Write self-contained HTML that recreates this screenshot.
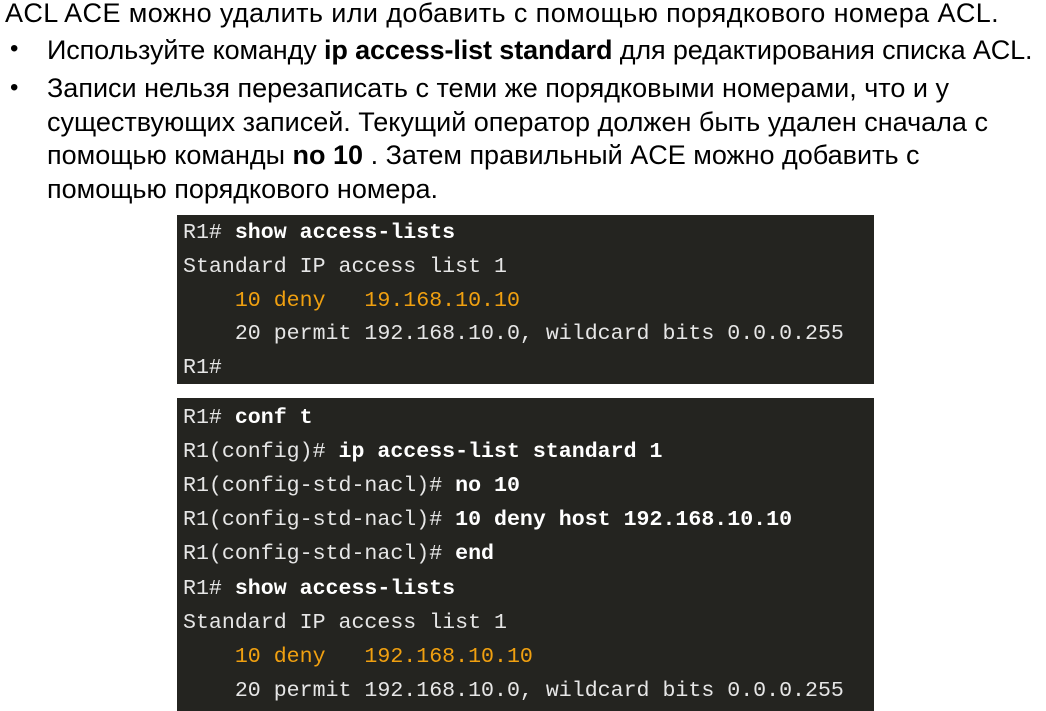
<!DOCTYPE html>
<html><head><meta charset="utf-8"><style>
body{margin:0;width:1046px;height:711px;background:#fff;overflow:hidden;position:relative;font-family:"Liberation Sans",Arial,sans-serif;color:#000}
.t{position:absolute;font-size:27px;white-space:nowrap;line-height:33px}
.b{position:absolute;left:10px;font-size:24px}
.box{position:absolute;left:177px;width:697px;background:#242420}
.box div{position:absolute;left:6px;font-family:"Liberation Mono",monospace;font-size:21.6px;color:#e6e6e6;white-space:pre;line-height:34px}
.box .w{color:#fff;font-weight:bold}
.box .o{color:#f0a010}
</style></head><body>
<div class="t" style="left:5px;top:-3px;letter-spacing:0.4px">ACL ACE можно удалить или добавить с помощью порядкового номера ACL.</div>
<div class="b" style="top:35px">•</div>
<div class="t" style="left:47px;top:34px;letter-spacing:-0.12px">Используйте команду <b>ip access-list standard</b> для редактирования списка ACL.</div>
<div class="b" style="top:74px">•</div>
<div class="t" style="left:47px;top:72px;line-height:33.5px">Записи нельзя перезаписать с теми же порядковыми номерами, что и у<br>существующих записей. Текущий оператор должен быть удален сначала с<br>помощью команды <b>no 10</b> . Затем правильный ACE можно добавить с<br>помощью порядкового номера.</div>
<div class="box" style="top:215px;height:169px">
<div style="top:1px">R1# <span class="w">show access-lists</span></div>
<div style="top:35px">Standard IP access list 1</div>
<div style="top:69px" class="o">    10 deny   19.168.10.10</div>
<div style="top:102px">    20 permit 192.168.10.0, wildcard bits 0.0.0.255</div>
<div style="top:136px">R1#</div>
</div>
<div class="box" style="top:398px;height:313px">
<div style="top:3px">R1# <span class="w">conf t</span></div>
<div style="top:37px">R1(config)# <span class="w">ip access-list standard 1</span></div>
<div style="top:71px">R1(config-std-nacl)# <span class="w">no 10</span></div>
<div style="top:105px">R1(config-std-nacl)# <span class="w">10 deny host 192.168.10.10</span></div>
<div style="top:139px">R1(config-std-nacl)# <span class="w">end</span></div>
<div style="top:174px">R1# <span class="w">show access-lists</span></div>
<div style="top:208px">Standard IP access list 1</div>
<div style="top:242px" class="o">    10 deny   192.168.10.10</div>
<div style="top:276px">    20 permit 192.168.10.0, wildcard bits 0.0.0.255</div>
</div>
</body></html>
